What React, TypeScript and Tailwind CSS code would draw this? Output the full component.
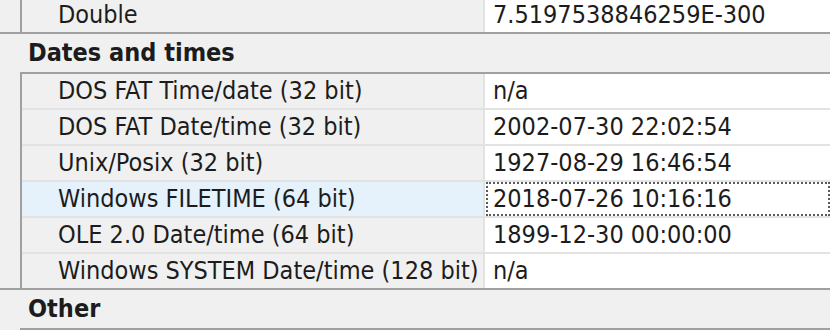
import React from 'react'

interface Prop {
  label: string
  value: string
  selected?: boolean
}

const dates: Prop[] = [
  { label: 'DOS FAT Time/date (32 bit)', value: 'n/a' },
  { label: 'DOS FAT Date/time (32 bit)', value: '2002-07-30 22:02:54' },
  { label: 'Unix/Posix (32 bit)', value: '1927-08-29 16:46:54' },
  { label: 'Windows FILETIME (64 bit)', value: '2018-07-26 10:16:16', selected: true },
  { label: 'OLE 2.0 Date/time (64 bit)', value: '1899-12-30 00:00:00' },
  { label: 'Windows SYSTEM Date/time (128 bit)', value: 'n/a' },
]

function Row({ p, last }: { p: Prop; last?: boolean }) {
  return (
    <div className={last ? 'flex h-[34px]' : 'flex h-[36px] border-b-2 border-[#e3e3e3]'}>
      <div
        className={
          'w-[463px] shrink-0 pl-[36px] flex items-center whitespace-nowrap overflow-hidden border-r-2 border-[#e3e3e3] ' +
          (p.selected ? 'bg-[#e5f1fb]' : 'bg-[#f0f0f0]')
        }
      >
        {p.label}
      </div>
      <div className="flex-1 bg-white flex items-stretch">
        {p.selected ? (
          <div className="flex-1 flex items-center pl-[5px] ml-[1px] border-2 border-dotted border-[#5a5a5a]">
            {p.value}
          </div>
        ) : (
          <div className="flex-1 flex items-center pl-[8px]">{p.value}</div>
        )}
      </div>
    </div>
  )
}

function Group({ rows, top = true }: { rows: Prop[]; top?: boolean }) {
  return (
    <div className="flex border-b-2 border-[#a0a0a0]">
      <div className="w-[20px] shrink-0" />
      <div className={'flex-1 border-l-2 border-[#a0a0a0] ' + (top ? 'border-t-2' : '')}>
        {rows.map((p, i) => (
          <Row key={p.label} p={p} last={i === rows.length - 1} />
        ))}
      </div>
    </div>
  )
}

function Category({ title }: { title: string }) {
  return (
    <div className="h-[38px] flex items-center pl-[28px] font-bold">{title}</div>
  )
}

export default function App() {
  return (
    <div className="w-[830px] h-[330px] overflow-hidden bg-[#f0f0f0] text-[#1c1c1c] text-[25px] font-['DejaVu_Sans_Condensed','DejaVu_Sans','Liberation_Sans',sans-serif]">
      <div className="-mt-[2px]">
        <Group top={false} rows={[{ label: 'Double', value: '7.5197538846259E-300' }]} />
        <Category title="Dates and times" />
        <Group rows={dates} />
        <Category title="Other" />
        <div className="flex">
          <div className="w-[20px] shrink-0" />
          <div className="flex-1 border-t-2 border-l-2 border-[#a0a0a0] h-[20px]" />
        </div>
      </div>
    </div>
  )
}
